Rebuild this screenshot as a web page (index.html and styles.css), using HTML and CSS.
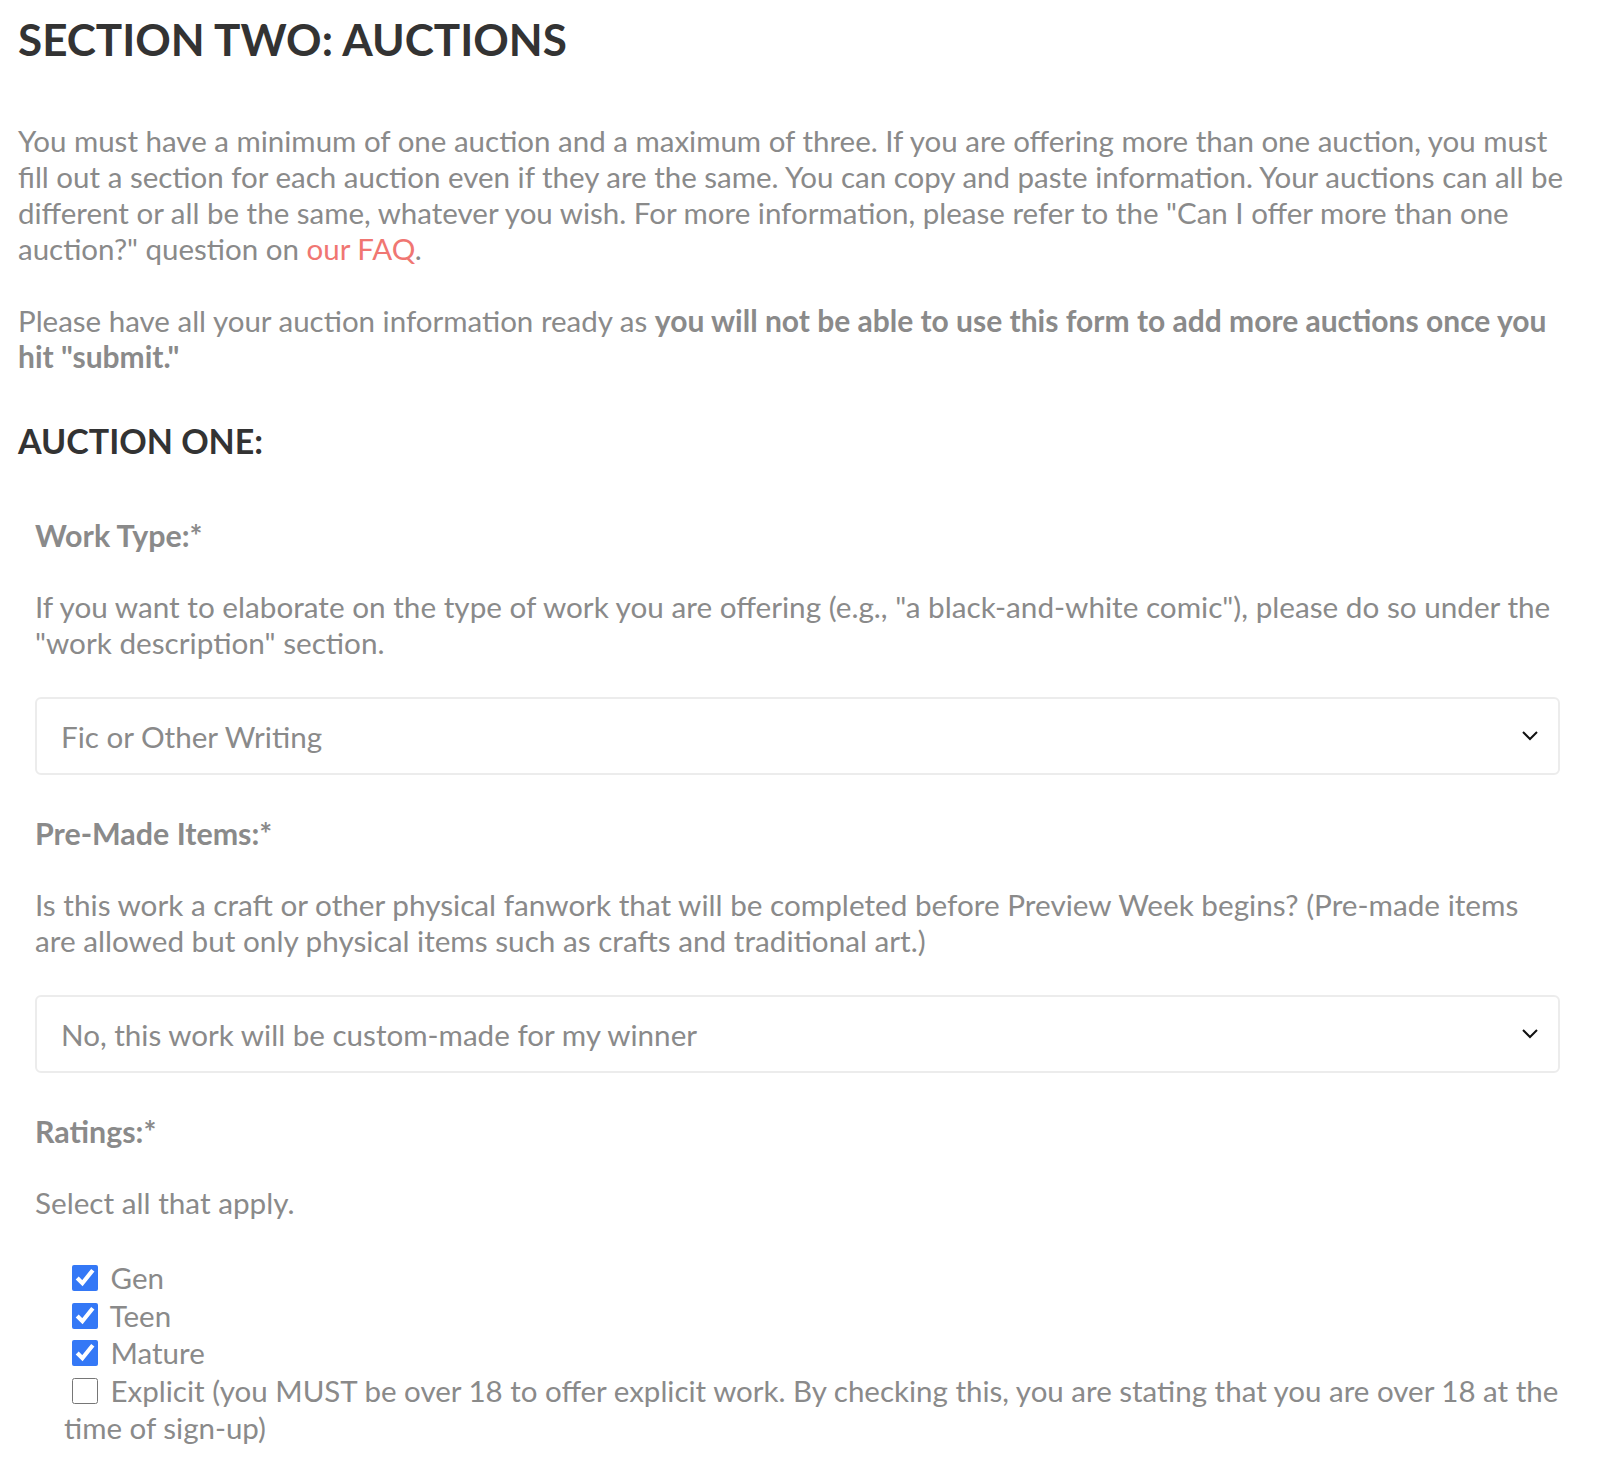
FILE: index.html
```html
<!DOCTYPE html>
<html lang="en">
<head>
    <meta charset="UTF-8">
    <meta name="viewport" content="width=device-width, initial-scale=1.0">
    <title>Section Two: Auctions</title>
    <link rel="stylesheet" href="styles.css">
</head>
<body>
    <div class="page">
        <h1>SECTION TWO: AUCTIONS</h1>

        <p class="intro">You must have a minimum of one auction and a maximum of three. If you are offering more than one auction, you must fill out a section for each auction even if they are the same. You can copy and paste information. Your auctions can all be different or all be the same, whatever you wish. For more information, please refer to the "Can I offer more than one auction?" question on <a href="#">our FAQ</a>.</p>

        <p class="intro">Please have all your auction information ready as <strong>you will not be able to use this form to add more auctions once you hit "submit."</strong></p>

        <h2>AUCTION ONE:</h2>

        <div class="field">
            <label class="field-label" for="workType">Work Type:*</label>
            <p class="hint">If you want to elaborate on the type of work you are offering (e.g., "a black-and-white comic"), please do so under the "work description" section.</p>
            <div class="select-wrap">
                <select id="workType">
                    <option>Fic or Other Writing</option>
                    <option>Art</option>
                    <option>Podfic</option>
                    <option>Craft</option>
                </select>
                <svg class="chevron" width="18" height="11" viewBox="0 0 18 11"><path d="M2 2l7 7 7-7" fill="none" stroke="#111" stroke-width="2"/></svg>
            </div>
        </div>

        <div class="field">
            <label class="field-label" for="preMade">Pre-Made Items:*</label>
            <p class="hint">Is this work a craft or other physical fanwork that will be completed before Preview Week begins? (Pre-made items are allowed but only physical items such as crafts and traditional art.)</p>
            <div class="select-wrap">
                <select id="preMade">
                    <option>No, this work will be custom-made for my winner</option>
                    <option>Yes, this is a pre-made item</option>
                </select>
                <svg class="chevron" width="18" height="11" viewBox="0 0 18 11"><path d="M2 2l7 7 7-7" fill="none" stroke="#111" stroke-width="2"/></svg>
            </div>
        </div>

        <div class="field">
            <span class="field-label">Ratings:*</span>
            <p class="hint">Select all that apply.</p>
            <div class="checks">
                <label class="check"><input type="checkbox" checked> Gen</label><br>
                <label class="check"><input type="checkbox" checked> Teen</label><br>
                <label class="check"><input type="checkbox" checked> Mature</label><br>
                <label class="check"><input type="checkbox"> Explicit (you MUST be over 18 to offer explicit work. By checking this, you are stating that you are over 18 at the time of sign-up)</label>
            </div>
        </div>
    </div>
</body>
</html>
```

FILE: styles.css
```css
body {
    font-family: Lato, "Open Sans", sans-serif;
    margin: 0;
    background-color: #ffffff;
    color: #8a8a8a;
}
.page {
    padding: 0 40px 0 18px;
}
h1 {
    font-size: 44px;
    font-weight: 700;
    color: #333333;
    margin: 14px 0 0;
    line-height: 50px;
}
h2 {
    font-size: 34px;
    font-weight: 700;
    color: #333333;
    margin: 46px 0 0;
    line-height: 40px;
}
.intro {
    font-size: 29.5px;
    line-height: 36px;
    margin: 59px -8px 0 0;
}
.intro + .intro {
    margin-top: 36px;
}
.intro a {
    color: #f07672;
    text-decoration: none;
}
.intro strong {
    font-weight: 700;
    font-size: 30px;
    line-height: 1;
}
.field {
    padding-left: 17px;
    margin-top: 56px;
}
.field + .field {
    margin-top: 40px;
}
.field-label {
    display: block;
    font-size: 30.4px;
    font-weight: 700;
    line-height: 36px;
}
.hint {
    font-size: 29.7px;
    line-height: 36px;
    margin: 36px 0 0;
}
.select-wrap {
    position: relative;
    margin-top: 36px;
}
select {
    width: 100%;
    height: 78px;
    padding: 0 60px 0 24px;
    font-family: Lato, sans-serif;
    font-size: 29.6px;
    color: #8a8a8a;
    background: #ffffff;
    border: 2px solid #ececec;
    border-radius: 6px;
    appearance: none;
    -webkit-appearance: none;
}
.chevron {
    position: absolute;
    right: 21px;
    top: 33px;
    pointer-events: none;
}
.checks {
    margin: 38px -6px 0 0;
    padding-left: 29px;
    font-size: 29.5px;
    line-height: 37.5px;
}
.check input {
    width: 26px;
    height: 26px;
    margin: 0 5px 0 8px;
    vertical-align: -2px;
    accent-color: #3478f6;
}
```
